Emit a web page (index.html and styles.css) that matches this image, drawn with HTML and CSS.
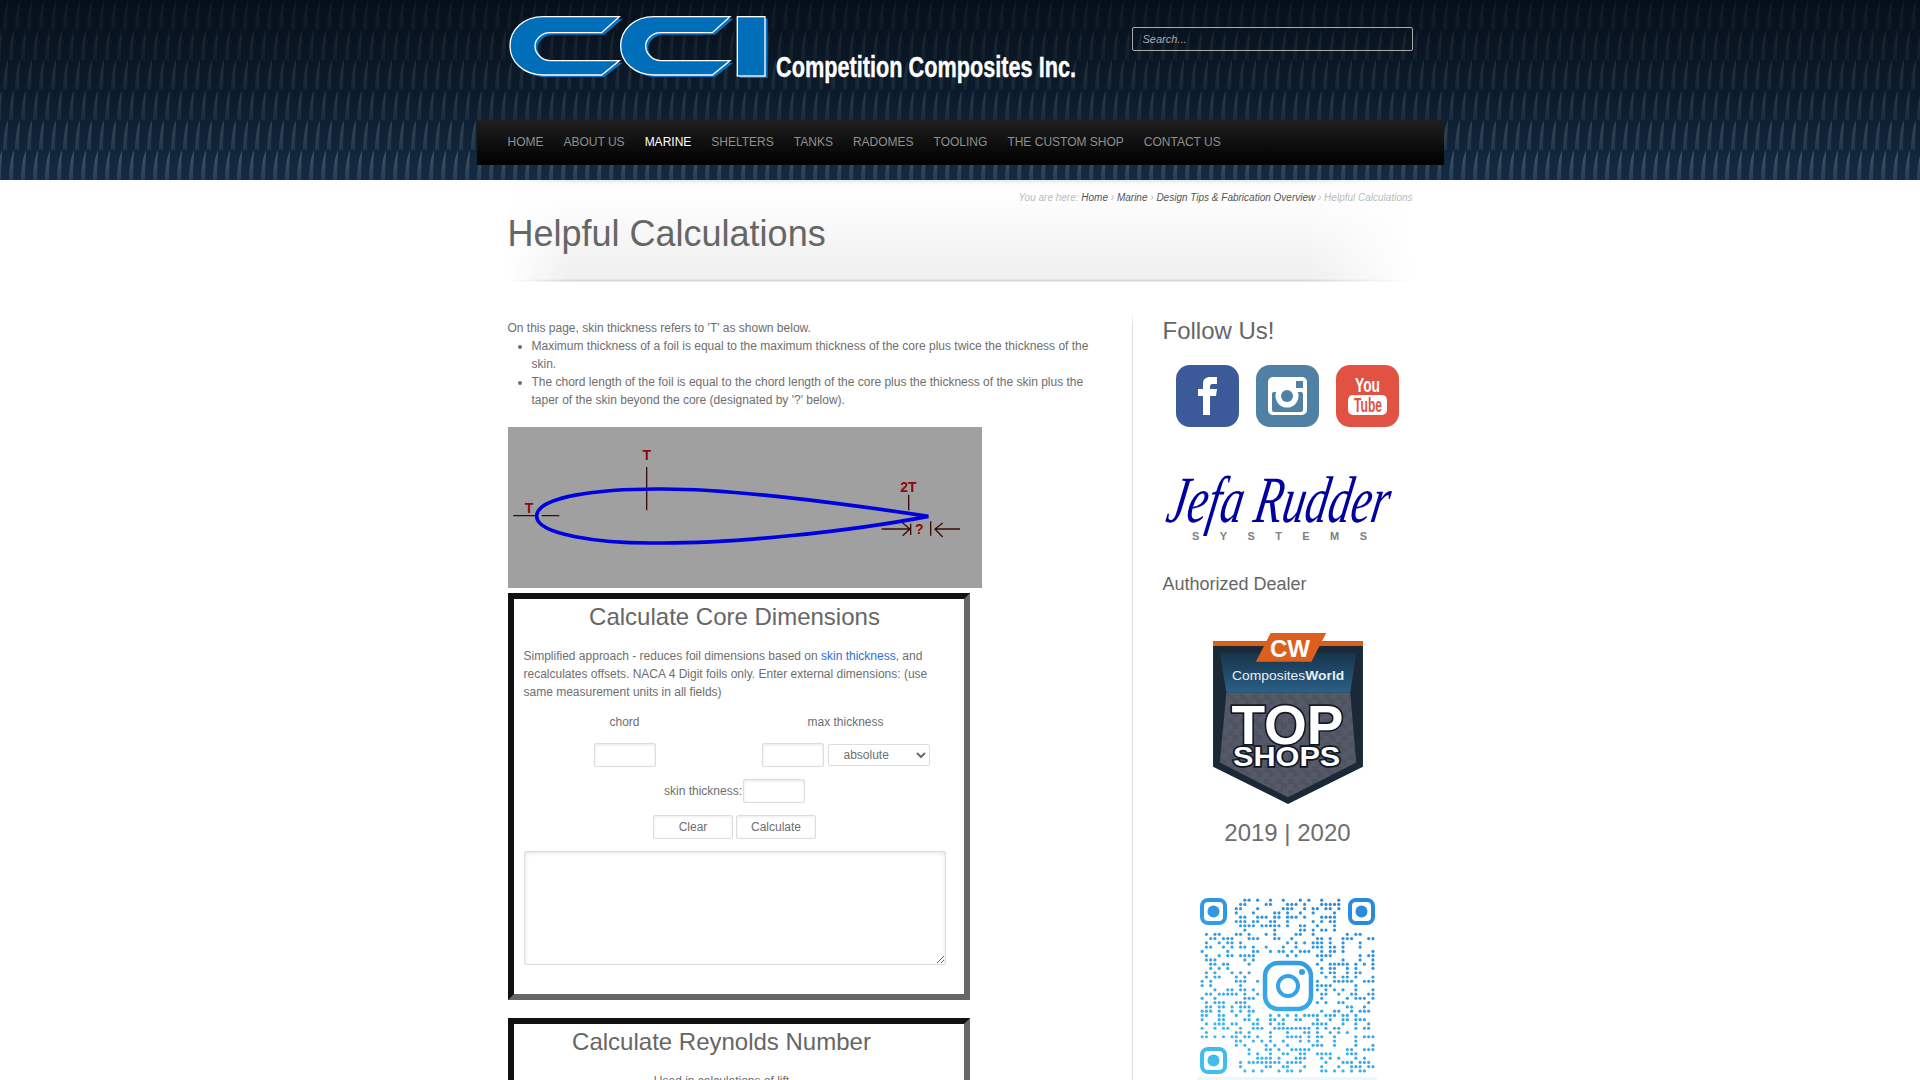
FILE: index.html
```html
<!DOCTYPE html>
<html lang="en">
<head>
    <meta charset="UTF-8">
    <meta name="viewport" content="width=device-width, initial-scale=1.0">
    <title>Helpful Calculations</title>
    <link rel="stylesheet" href="styles.css">
</head>
<body>
<div class="page">
    <header class="header">
        <div class="wrap">
            <div class="header-top">
                <svg class="logo" width="576" height="80" viewBox="0 0 576 80">
                    <g transform="scale(0.3333)">
                        <g fill="#0a6fbe" transform="translate(8 6)">
                            <path d="M360 20H130C70 20 30 60 30 107C30 155 70 195 130 195H305L360 152H150C125 152 105 130 105 108C105 88 125 68 150 68H305Z"/>
                            <path d="M692 20H462C402 20 362 60 362 107C362 155 402 195 462 195H637L692 152H482C457 152 437 130 437 108C437 88 457 68 482 68H637Z"/>
                            <rect x="712" y="20" width="83" height="178"/>
                        </g>
                        <g fill="#006eb8" stroke="#fff" stroke-width="4">
                            <path d="M358 20H130C70 20 30 60 30 107C30 155 70 195 130 195H305L358 152H150C125 152 105 130 105 108C105 88 125 68 150 68H305Z"/>
                            <path d="M690 20H462C402 20 362 60 362 107C362 155 402 195 462 195H637L690 152H482C457 152 437 130 437 108C437 88 457 68 482 68H637Z"/>
                            <rect x="712" y="20" width="83" height="178"/>
                        </g>
                    </g>
                    <text x="276" y="67" class="logo-name" textLength="300" lengthAdjust="spacingAndGlyphs">Competition Composites Inc.</text>
                </svg>
                <input class="search" type="text" placeholder="Search...">
            </div>
            <nav class="nav">
                <a href="#">Home</a>
                <a href="#">About Us</a>
                <a href="#" class="active">Marine</a>
                <a href="#">Shelters</a>
                <a href="#">Tanks</a>
                <a href="#">Radomes</a>
                <a href="#">Tooling</a>
                <a href="#">The Custom Shop</a>
                <a href="#">Contact Us</a>
            </nav>
        </div>
    </header>

    <div class="wrap">
        <div class="content">
            <div class="title-band">
                <p class="breadcrumb">You are here: <a href="#">Home</a> › <a href="#">Marine</a> › <a href="#">Design Tips &amp; Fabrication Overview</a> › Helpful Calculations</p>
                <h1>Helpful Calculations</h1>
            </div>

            <div class="columns">
                <main class="main">
                    <p>On this page, skin thickness refers to 'T' as shown below.</p>
                    <ul>
                        <li>Maximum thickness of a foil is equal to the maximum thickness of the core plus twice the thickness of the skin.</li>
                        <li>The chord length of the foil is equal to the chord length of the core plus the thickness of the skin plus the taper of the skin beyond the core (designated by '?' below).</li>
                    </ul>

                    <svg class="foil" width="474" height="161" viewBox="24 22 1422 483">
                        <rect x="24" y="22" width="1422" height="483" fill="#a0a0a0"/>
                        <g stroke="#3a0a0a" stroke-width="4" fill="none">
                            <path d="M440 142V272M40 288H105M125 288H178M1226 225V272"/>
                            <path d="M1145 328H1230M1208 310L1230 328L1208 348M1232 312V346"/>
                            <path d="M1380 328H1305M1328 310L1305 328L1328 352M1292 305V348"/>
                        </g>
                        <path d="M1285 290C1100 262 700 205 470 208C300 208 110 230 110 290C110 345 300 372 470 370C700 372 1050 335 1285 290Z" fill="none" stroke="#0000e0" stroke-width="11"/>
                        <g class="foil-label">
                            <text x="440" y="121">T</text>
                            <text x="87" y="280">T</text>
                            <text x="1225" y="218">2T</text>
                            <text x="1258" y="344">?</text>
                        </g>
                    </svg>

                    <section class="calc">
                        <div class="calc-body">
                            <h2>Calculate Core Dimensions</h2>
                            <p>Simplified approach - reduces foil dimensions based on <a href="#">skin thickness</a>, and recalculates offsets. NACA 4 Digit foils only. Enter external dimensions: (use same measurement units in all fields)</p>
                            <div class="calc-grid">
                                <span>chord</span>
                                <span>max thickness</span>
                                <div class="cell"><input type="text"></div>
                                <div class="cell">
                                    <input type="text">
                                    <select><option>absolute</option></select>
                                </div>
                            </div>
                            <div class="calc-row"><label>skin thickness:</label><input type="text"></div>
                            <div class="calc-row calc-buttons">
                                <button>Clear</button>
                                <button>Calculate</button>
                            </div>
                            <textarea></textarea>
                        </div>
                    </section>

                    <section class="calc">
                        <div class="calc-body calc-short">
                            <h2>Calculate Reynolds Number</h2>
                            <p class="center">Used in calculations of lift</p>
                        </div>
                    </section>
                </main>

                <aside class="sidebar">
                    <h3>Follow Us!</h3>
                    <div class="social">
                        <svg width="63" height="62" viewBox="0 0 63 62">
                            <rect width="63" height="62" rx="14" fill="#3c5a99"/>
                            <path fill="#fff" d="M27 50V31H22V24H27V19C27 14 30 12 34 12H41V19H36.5C34.5 19 34 20 34 22V24H41L40 31H34V50Z"/>
                        </svg>
                        <svg width="63" height="62" viewBox="0 0 63 62">
                            <rect width="63" height="62" rx="14" fill="#5180a5"/>
                            <rect x="12" y="12" width="39" height="38" rx="5" fill="#fff"/>
                            <rect x="16" y="27" width="31" height="20" rx="2" fill="#5180a5"/>
                            <circle cx="31" cy="31" r="11.5" fill="#fff"/>
                            <circle cx="31" cy="31" r="6" fill="#5180a5"/>
                            <rect x="40" y="16" width="7" height="7" fill="#5180a5"/>
                        </svg>
                        <svg width="63" height="62" viewBox="0 0 63 62">
                            <rect width="63" height="62" rx="14" fill="#e25243"/>
                            <text x="19" y="27" class="yt-you" textLength="25" lengthAdjust="spacingAndGlyphs">You</text>
                            <rect x="12" y="30" width="39" height="20" rx="5" fill="#fff"/>
                            <text x="18" y="47" class="yt-tube" textLength="28" lengthAdjust="spacingAndGlyphs">Tube</text>
                        </svg>
                    </div>

                    <svg class="jefa" width="232" height="72" viewBox="0 0 232 72">
                        <text x="0" y="48" class="jefa-name" textLength="222" lengthAdjust="spacingAndGlyphs" transform="skewX(-10) translate(10 0)">Jefa Rudder</text>
                        <text x="29" y="66" class="jefa-sub" textLength="175">SYSTEMS</text>
                    </svg>

                    <h4>Authorized Dealer</h4>

                    <svg class="badge" width="150" height="171" viewBox="100 37 448 511">
                        <defs>
                            <pattern id="weave" width="36" height="36" patternUnits="userSpaceOnUse">
                                <path d="M0 6H18M0 12H18M0 18H18M18 18V36M24 18V36M30 18V36" stroke="#000" stroke-opacity=".22" stroke-width="2"/>
                            </pattern>
                            <linearGradient id="bannerFill" x1="0" y1="0" x2="0" y2="1">
                                <stop offset="0" stop-color="#17334a"/>
                                <stop offset="1" stop-color="#2a6088"/>
                            </linearGradient>
                        </defs>
                        <path d="M100 62H548V437L324 548L100 437Z" fill="#1b2836"/>
                        <path d="M140 215H510L528 424L324 528L120 424Z" fill="#565a68"/>
                        <path d="M140 215H510L528 424L324 528L120 424Z" fill="url(#weave)"/>
                        <path d="M120 95H528L510 215H140Z" fill="url(#bannerFill)"/>
                        <path d="M100 62H548V76H100Z" fill="#dd5f1d"/>
                        <path d="M272 37H438L394 123H228Z" fill="#dd5f1d"/>
                        <text x="270" y="110" class="badge-cw" textLength="120" lengthAdjust="spacingAndGlyphs">CW</text>
                        <text x="157" y="178" class="badge-cworld" textLength="335" lengthAdjust="spacingAndGlyphs">Composites<tspan font-weight="700">World</tspan></text>
                        <text x="155" y="368" class="badge-big badge-top" textLength="335" lengthAdjust="spacingAndGlyphs">TOP</text>
                        <text x="160" y="433" class="badge-big badge-shops" textLength="320" lengthAdjust="spacingAndGlyphs">SHOPS</text>
                    </svg>

                    <p class="years">2019 | 2020</p>

                    <svg class="qr" id="qr" width="175" height="176" viewBox="0 0 175 176">
                        <defs>
                            <linearGradient id="qrFill" gradientUnits="userSpaceOnUse" x1="120" y1="0" x2="40" y2="176">
                                <stop offset="0" stop-color="#2a8ade"/>
                                <stop offset="1" stop-color="#41bdf0"/>
                            </linearGradient>
                        </defs>
                    </svg>
                    <div class="qr-caption"></div>
                </aside>
            </div>
        </div>
    </div>
</div>
<script src="qr.js"></script>
</body>
</html>
```

FILE: styles.css
```css
body {
    margin: 0;
    font-family: "Liberation Sans", Arial, sans-serif;
    font-size: 12px;
    line-height: 18px;
    color: #6e6e6e;
    background-color: #fff;
}

a {
    text-decoration: none;
}

.page {
    height: 1080px;
    overflow: hidden;
}

.header {
    height: 180px;
    background-color: #15304a;
    background-image:
        linear-gradient(rgba(3, 8, 15, 0.82), rgba(3, 8, 15, 0.5) 55%, rgba(3, 8, 15, 0.12) 100%),
        url("data:image/svg+xml,%3Csvg xmlns='http://www.w3.org/2000/svg' width='12' height='60'%3E%3Cdefs%3E%3ClinearGradient id='b' x1='0' y1='0' x2='0' y2='1'%3E%3Cstop offset='0' stop-color='%23fff' stop-opacity='.3'/%3E%3Cstop offset='1' stop-color='%23fff' stop-opacity='.1'/%3E%3C/linearGradient%3E%3C/defs%3E%3Cpath fill='url(%23b)' d='M3 30C3 18 5 7 8 0C7.5 10 7 20 7 30Z'/%3E%3Cpath fill='url(%23b)' d='M9 60C9 48 11 37 14 30C13.5 40 13 50 13 60Z'/%3E%3Cpath fill='url(%23b)' d='M-3 60C-3 48 -1 37 2 30C1.5 40 1 50 1 60Z'/%3E%3C/svg%3E");
}

.wrap {
    width: 967px;
    margin: 0 auto;
}

.header-top {
    height: 120px;
    display: flex;
    align-items: flex-start;
}

.logo {
    margin-left: 23px;
    margin-top: 10px;
    flex-shrink: 0;
}

.logo-name {
    font-size: 30px;
    font-weight: 700;
    fill: #fff;
    stroke: #fff;
    stroke-width: 0.4px;
}

.search {
    box-sizing: border-box;
    width: 281px;
    height: 24px;
    margin: 27px 31px 0 auto;
    padding: 0 10px;
    border: 1px solid #aaa;
    border-radius: 2px;
    background: transparent;
    font-family: inherit;
    font-size: 11px;
    font-style: italic;
    color: #aaa;
}

.search::placeholder {
    color: #aaa;
    opacity: 1;
}

.nav {
    height: 45px;
    padding-left: 31px;
    display: flex;
    align-items: center;
    gap: 20px;
    background: linear-gradient(#1f1f1f, #000);
}

.nav a {
    color: #8f8f8f;
    text-transform: uppercase;
    line-height: 45px;
}

.nav a.active {
    color: #fff;
}

.content {
    width: 905px;
    margin-left: 31px;
}

.title-band {
    box-sizing: border-box;
    height: 102px;
    padding-top: 11px;
    background:
        linear-gradient(90deg, #fff, rgba(255, 255, 255, 0) 7%, rgba(255, 255, 255, 0) 88%, #fff),
        linear-gradient(#e6e6e6, #fcfcfc 4px, #fff 10px, #efefef 97%, #d6d6d6 98.5%, #f4f4f4 100%);
}

.breadcrumb {
    margin: 0;
    font-size: 10px;
    font-style: italic;
    line-height: 14px;
    text-align: right;
    color: #bbb;
}

.breadcrumb a {
    color: #555;
}

h1 {
    margin: 9px 0 0;
    font-size: 36px;
    font-weight: 400;
    line-height: 40px;
    color: #666;
}

.columns {
    display: flex;
    margin-top: 30px;
}

.main {
    width: 594px;
    padding-top: 7px;
    padding-right: 30px;
    flex-shrink: 0;
}

.main > p {
    margin: 0;
}

.main ul {
    margin: 0;
    padding-left: 24px;
}

.foil {
    display: block;
    margin-top: 18px;
    margin-bottom: 5px;
}

.foil-label text {
    font-size: 42px;
    font-weight: 700;
    fill: #8c0a0a;
    text-anchor: middle;
}

.calc {
    box-sizing: border-box;
    width: 462px;
    margin-bottom: 18px;
    border: 6px solid;
    border-color: #111 #666 #666 #111;
    background: #fff;
}

.calc-body {
    width: 422px;
    margin-left: 10px;
    padding-bottom: 29px;
    display: flex;
    flex-direction: column;
    gap: 12px;
}

.calc-short {
    width: 396px;
}

.calc h2 {
    margin: 0;
    font-size: 24px;
    font-weight: 400;
    line-height: 36px;
    text-align: center;
    color: #666;
}

.calc p {
    margin: 0;
}

.calc p a {
    color: #2a6fd6;
}

.center {
    text-align: center;
}

.calc-grid {
    width: 432px;
    display: grid;
    grid-template-columns: 202px 220px;
    column-gap: 10px;
    row-gap: 12px;
    text-align: center;
}

.cell {
    display: flex;
    justify-content: center;
    align-items: center;
    gap: 4px;
}

.calc-row {
    display: flex;
    justify-content: center;
    align-items: center;
    gap: 1px;
}

.calc-buttons {
    gap: 3px;
}

.calc input,
.calc select,
.calc textarea,
.calc button {
    box-sizing: border-box;
    border: 1px solid #ddd;
    border-radius: 2px;
    background-color: #fff;
    font-family: inherit;
    font-size: 12px;
    color: #6e6e6e;
}

.calc input {
    width: 62px;
    height: 24px;
    box-shadow: inset 0 1px 3px rgba(0, 0, 0, 0.1);
}

.calc select {
    width: 102px;
    height: 22px;
    padding-left: 11px;
}

.calc button {
    width: 80px;
    height: 24px;
    box-shadow: inset 0 1px 3px rgba(0, 0, 0, 0.08);
}

.calc textarea {
    display: block;
    width: 422px;
    height: 114px;
    box-shadow: inset 0 1px 4px rgba(0, 0, 0, 0.12);
}

.sidebar {
    width: 249px;
    padding-left: 30px;
    border-left: 1px solid #ddd;
    border-image: linear-gradient(rgba(221, 221, 221, 0), #ddd 16px) 1;
}

.sidebar h3 {
    margin: 1px 0 0;
    font-size: 24px;
    font-weight: 400;
    line-height: 36px;
    color: #666;
}

.social {
    margin-top: 16px;
    display: flex;
    justify-content: center;
    gap: 17px;
}

.social svg {
    display: block;
}

.yt-you,
.yt-tube {
    font-weight: 700;
}

.yt-you {
    font-size: 21px;
    fill: #fff;
}

.yt-tube {
    font-size: 20px;
    fill: #e25243;
}

.jefa {
    display: block;
    margin-top: 47px;
}

.jefa-name {
    font-family: "Liberation Serif", serif;
    font-size: 66px;
    font-style: italic;
    fill: #0000a0;
}

.jefa-sub {
    font-size: 11px;
    font-weight: 700;
    fill: #808080;
}

.sidebar h4 {
    margin: 29px 0 0;
    font-size: 18px;
    font-weight: 400;
    line-height: 18px;
    color: #666;
}

.badge {
    display: block;
    margin: 40px 0 0 50.5px;
}

.badge-cw {
    font-size: 72px;
    font-weight: 700;
    fill: #fff;
}

.badge-cworld {
    font-size: 38px;
    fill: #e8eef3;
}

.badge-big {
    font-weight: 700;
    fill: #fff;
    stroke: #111a24;
    stroke-width: 10px;
    paint-order: stroke;
}

.badge-top {
    font-size: 165px;
}

.badge-shops {
    font-size: 82px;
}

.years {
    margin: 15px 0 0;
    padding-left: 1px;
    font-size: 24px;
    line-height: 28px;
    text-align: center;
    color: #6e6e6e;
}

.qr {
    display: block;
    margin: 51px auto 0;
}

.qr-caption {
    width: 180px;
    height: 3px;
    margin: 3px auto 0;
    background: #eef7fc;
}
```

FILE: qr.js
```js
// Fills the QR picture in the sidebar: three corner eyes, dots, and the camera in the middle
const svg = document.getElementById('qr');
const NS = 'http://www.w3.org/2000/svg';
const CELL = 4.27;
const COUNT = 41;

function add(name, attrs) {
    const el = document.createElementNS(NS, name);
    for (let key in attrs) {
        el.setAttribute(key, attrs[key]);
    }
    svg.appendChild(el);
}

let seed = 20192020;
function nextBit() {
    seed = (seed * 1103515245 + 12345) & 0x7fffffff;
    return (seed >> 16) % 100 < 42;
}

function isReserved(col, row) {
    const inEye = (col < 8 && row < 8) || (col > 32 && row < 8) || (col < 8 && row > 32);
    const inCentre = col > 13 && col < 27 && row > 13 && row < 27;
    return inEye || inCentre;
}

for (let row = 0; row < COUNT; row++) {
    for (let col = 0; col < COUNT; col++) {
        if (!isReserved(col, row) && nextBit()) {
            add('circle', {
                cx: (col + 0.5) * CELL,
                cy: (row + 0.5) * CELL,
                r: 1.6,
                fill: 'url(#qrFill)'
            });
        }
    }
}

[[0, 0], [148, 0], [0, 149]].forEach(function (pos) {
    add('rect', {
        x: pos[0] + 2, y: pos[1] + 2, width: 23, height: 23, rx: 6,
        fill: 'none', stroke: 'url(#qrFill)', 'stroke-width': 4
    });
    add('circle', { cx: pos[0] + 13.5, cy: pos[1] + 13.5, r: 6, fill: 'url(#qrFill)' });
});

add('rect', {
    x: 65, y: 65, width: 46, height: 46, rx: 13,
    fill: 'none', stroke: 'url(#qrFill)', 'stroke-width': 4.5
});
add('circle', { cx: 88, cy: 88, r: 10, fill: 'none', stroke: 'url(#qrFill)', 'stroke-width': 4 });
add('circle', { cx: 102, cy: 74, r: 3, fill: 'url(#qrFill)' });
```
